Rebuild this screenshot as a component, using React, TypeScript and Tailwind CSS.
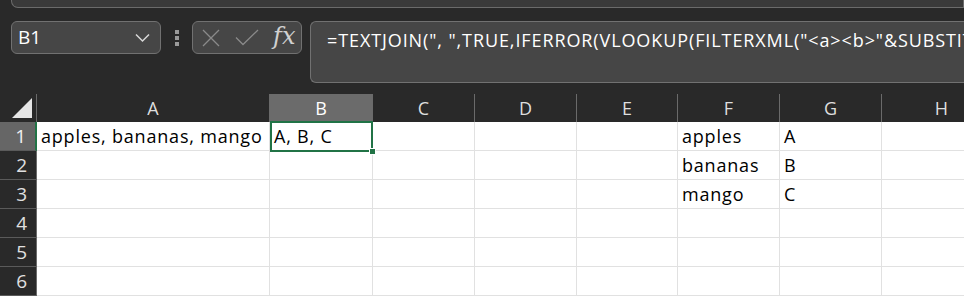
import React from "react";

const cols = [
  { l: "A", w: 233 },
  { l: "B", w: 103 },
  { l: "C", w: 102 },
  { l: "D", w: 102 },
  { l: "E", w: 101 },
  { l: "F", w: 102 },
  { l: "G", w: 102 },
  { l: "H", w: 120 },
];

const data: Record<string, string> = {
  "1A": "apples, bananas, mango",
  "1B": "A, B, C",
  "1F": "apples",
  "1G": "A",
  "2F": "bananas",
  "2G": "B",
  "3F": "mango",
  "3G": "C",
};

export default function App() {
  const font = { fontFamily: '"Open Sans", "Noto Sans", sans-serif' };
  return (
    <div className="w-[964px] h-[296px] overflow-hidden bg-[#292929] flex flex-col" style={font}>
      {/* top strip */}
      <div className="h-[8px] ml-[11px] -mt-[4px] pt-[4px] box-content bg-[#3a3a3a] border border-t-0 border-[#6b6b6b] rounded-bl-[7px]" />
      {/* formula bar */}
      <div className="flex items-start mt-[13px] h-[62px]">
        <div className="ml-[11px] w-[150px] h-[33px] rounded-[6px] border border-[#717171] bg-[#464646] flex items-center justify-between pl-[6px] pr-[10px]">
          <span className="text-[19px] text-white leading-none">B1</span>
          <svg width="15" height="10" viewBox="0 0 15 10">
            <path d="M1 1.5 L7.5 8 L14 1.5" fill="none" stroke="#d8d8d8" strokeWidth="1.5" />
          </svg>
        </div>
        <div className="w-[31px] h-[33px] flex flex-col items-center justify-center gap-[2px]">
          <div className="w-[4px] h-[4px] bg-[#9a9a9a]" />
          <div className="w-[4px] h-[4px] bg-[#9a9a9a]" />
          <div className="w-[4px] h-[4px] bg-[#9a9a9a]" />
        </div>
        <div className="w-[110px] h-[33px] rounded-[6px] border border-[#717171] bg-[#464646] flex items-center pl-[9px]">
          <svg width="18" height="18" viewBox="0 0 18 18">
            <path d="M1 1 L17 17 M17 1 L1 17" stroke="#8a8a8a" strokeWidth="1.3" />
          </svg>
          <svg width="24" height="17" viewBox="0 0 24 17" className="ml-[15px]">
            <path d="M1 8.5 L8 15.5 L23 1" fill="none" stroke="#8a8a8a" strokeWidth="1.3" />
          </svg>
          <span
            className="ml-[14px] text-[24px] italic text-[#d0d0d0] leading-none -mt-[3px]"
            style={{ fontFamily: '"DejaVu Serif", "Liberation Serif", serif' }}
          >
            fx
          </span>
        </div>
        <div className="ml-[8px] flex-1 h-[62px] rounded-l-[6px] border border-r-0 border-[#717171] bg-[#464646] pl-[16px] pt-[5px] overflow-hidden whitespace-nowrap">
          <span className="text-[18px] tracking-[0.9px] text-white">
            =TEXTJOIN(", ",TRUE,IFERROR(VLOOKUP(FILTERXML("&lt;a&gt;&lt;b&gt;"&amp;SUBSTITUTE(A1,", ","&lt;/b&gt;&lt;b&gt;")&amp;"&lt;/b&gt;&lt;/a&gt;","//b"),F1:G3,2,FALSE),""))
          </span>
        </div>
      </div>
      {/* grid */}
      <div className="mt-[11px] relative flex-1">
        {/* header row */}
        <div className="flex h-[28px]">
          <div className="w-[37px] shrink-0 relative border-r border-[#6a6a6a]">
            <svg width="22" height="22" viewBox="0 0 22 22" className="absolute right-[3px] bottom-[3px]">
              <path d="M21 1 L21 21 L1 21 Z" fill="#e6e6e6" />
            </svg>
          </div>
          {cols.map((c) => (
            <div
              key={c.l}
              style={{ width: c.w }}
              className={
                "shrink-0 flex items-end justify-center pb-[1px] text-[18px] leading-[26px] border-r border-[#6a6a6a] " +
                (c.l === "B" ? "bg-[#6b6b6b] text-white" : "text-[#dedede]")
              }
            >
              {c.l}
            </div>
          ))}
        </div>
        {[1, 2, 3, 4, 5, 6].map((r) => (
          <div key={r} className="flex h-[29px]">
            <div
              className={
                "w-[37px] shrink-0 flex items-center justify-end pr-[9px] text-[19px] border-b border-[#5a5a5a] " +
                (r === 1 ? "bg-[#666666] text-[#f0f0f0] border-r-2 border-r-[#217346]" : "text-[#e0e0e0] border-r border-r-[#6a6a6a]")
              }
            >
              {r}
            </div>
            {cols.map((c) => (
              <div
                key={c.l}
                style={{ width: c.w }}
                className="shrink-0 bg-white border-r border-b border-[#e1e1e1] flex items-center pl-[4px] text-[18px] tracking-[0.8px] text-black whitespace-nowrap overflow-visible"
              >
                {data[`${r}${c.l}`] ?? ""}
              </div>
            ))}
          </div>
        ))}
        {/* selection */}
        <div className="absolute left-[270px] top-[27px] w-[103px] h-[31px] border-2 border-[#217346] pointer-events-none" />
        <div className="absolute left-[369px] top-[54px] w-[7px] h-[7px] bg-[#217346] border border-white" />
      </div>
    </div>
  );
}
